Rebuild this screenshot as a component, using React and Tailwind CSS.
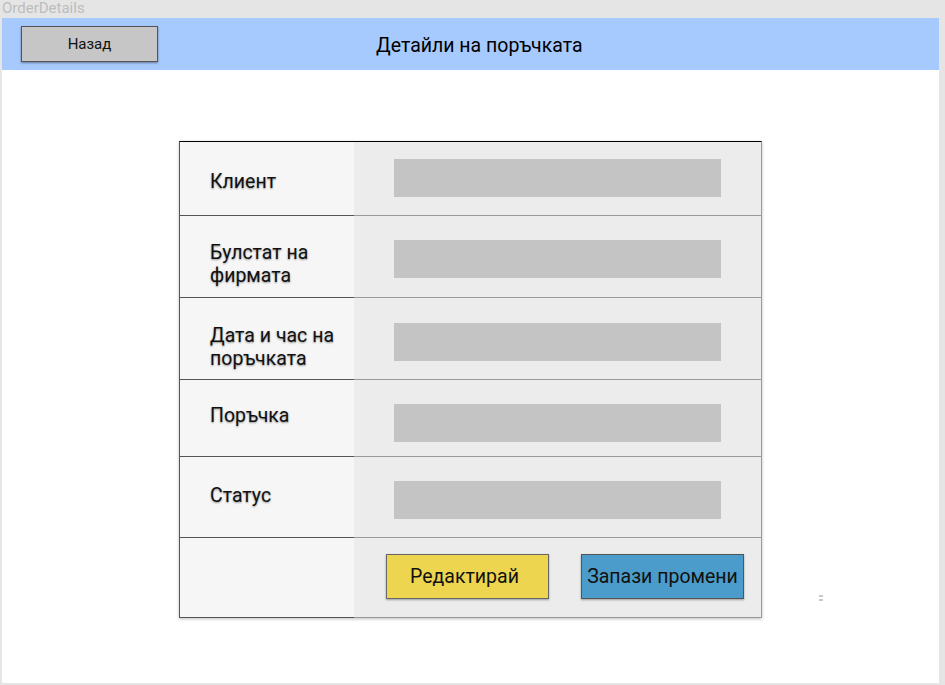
import * as React from "react";

const ROWS = [
  { label: ["Клиент"], h: "h-[74px]", labelPt: "pt-[28px]", inputPt: "pt-[17px]" },
  { label: ["Булстат на", "фирмата"], h: "h-[82px]", labelPt: "pt-[25px]", inputPt: "pt-[24px]" },
  { label: ["Дата и час на", "поръчката"], h: "h-[82px]", labelPt: "pt-[26px]", inputPt: "pt-[25px]" },
  { label: ["Поръчка"], h: "h-[77px]", labelPt: "pt-[24px]", inputPt: "pt-[24px]" },
  { label: ["Статус"], h: "h-[81px]", labelPt: "pt-[27px]", inputPt: "pt-[24px]" }
];

export default function App() {
  return (
    <div className="w-[945px] h-[685px] bg-[#e5e5e5] font-['Roboto',sans-serif] overflow-hidden">
      <div className="h-[18px] pl-[2px] text-[15px] leading-[16px] text-[#bdbdbd]">
        OrderDetails
      </div>

      <div className="relative ml-[2px] w-[937px] h-[665px] bg-white">
        <header className="h-[52px] bg-[#a6c9fe] flex items-start">
          <button className="mt-[8px] ml-[19px] w-[137px] h-[36px] bg-[#c6c6c6] border border-[#555] shadow-[0_1px_2px_rgba(0,0,0,0.4)] text-[15px] text-[#111]">
            Назад
          </button>
          <h1 className="ml-[218px] mt-[16px] text-[19.5px] leading-[23px] text-black">
            Детайли на поръчката
          </h1>
        </header>

        <div className="ml-[177px] mt-[71px] w-[583px] border-t border-l border-l-[#555] border-r border-r-[#999] shadow-[0_1px_3px_rgba(0,0,0,0.25)]">
          {ROWS.map((row, i) => (
            <div key={i} className={`flex ${row.h}`}>
              <div
                className={`w-[174px] bg-[#f6f6f6] border-b border-[#555] pl-[30px] ${row.labelPt}`}
              >
                <div className="text-[19.5px] leading-[23px] text-[#111] [text-shadow:0_1px_2px_rgba(0,0,0,0.4)]">
                  {row.label.map((l, j) => (
                    <div key={j}>{l}</div>
                  ))}
                </div>
              </div>
              <div
                className={`flex-1 bg-[#ececec] border-b border-[#999] pl-[40px] ${row.inputPt}`}
              >
                <div className="w-[327px] h-[38px] bg-[#c4c4c4]" />
              </div>
            </div>
          ))}

          <div className="flex h-[80px]">
            <div className="w-[174px] bg-[#f6f6f6] border-b border-[#555]" />
            <div className="flex-1 bg-[#ececec] border-b border-[#999] pl-[32px] pt-[16px] flex items-start gap-[32px]">
              <button className="w-[163px] h-[45px] pr-[6px] bg-[#edd54f] border border-[#666] shadow-[0_1px_2px_rgba(0,0,0,0.35)] text-[19.5px] text-[#111]">
                Редактирай
              </button>
              <button className="w-[163px] h-[45px] bg-[#4b9cca] border border-[#555] shadow-[0_1px_2px_rgba(0,0,0,0.35)] text-[19.5px] text-[#111]">
                Запази промени
              </button>
            </div>
          </div>
        </div>

        <div className="absolute left-[817px] top-[577px] flex flex-col gap-[2px]">
          <div className="w-[4px] h-[2px] bg-[#c8c8c8]" />
          <div className="w-[4px] h-[2px] bg-[#c8c8c8]" />
        </div>
      </div>
    </div>
  );
}
